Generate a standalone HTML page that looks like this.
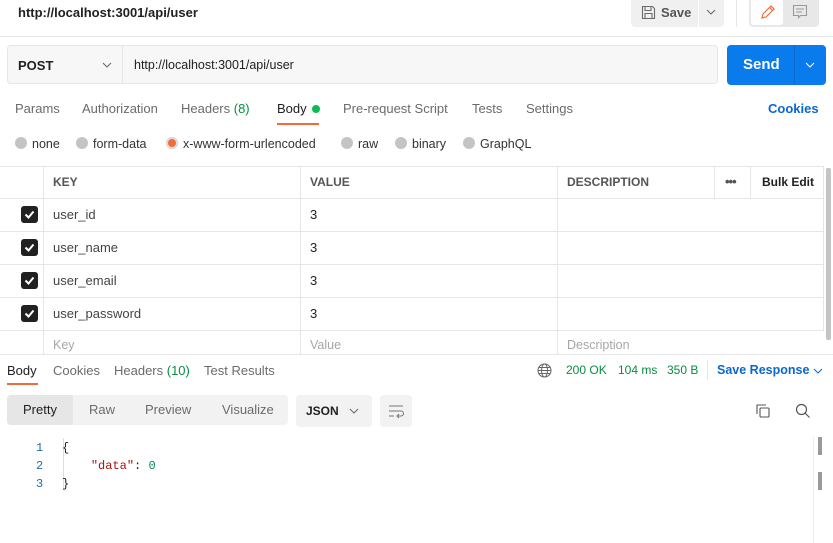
<!DOCTYPE html><html><head><style>
*{margin:0;padding:0;box-sizing:border-box}
body{width:833px;height:543px;background:#fff;font-family:"Liberation Sans",sans-serif;font-size:13px;color:#212121;position:relative;overflow:hidden}
.a{position:absolute;white-space:nowrap}
.g{color:#6b6b6b}
.hl{position:absolute;height:1px;background:#e6e6e6}
.vl{position:absolute;width:1px;background:#e6e6e6}
.cb{position:absolute;left:21px;width:17px;height:17px;background:#212121;border-radius:3px}
.cb svg{position:absolute;left:3px;top:3px}
.rd{display:inline-block;width:12px;height:12px;border-radius:50%;background:#c4c4c4;vertical-align:-1px;margin-right:5px}
</style></head><body>
<div class="a" style="left:18px;top:5px;font-size:13px;font-weight:bold">http://localhost:3001/api/user</div>
<div class="a" style="left:631px;top:0;width:67px;height:27px;background:#f0f0f0;border-radius:0 0 0 4px"></div>
<svg class="a" style="left:641px;top:5px" width="15" height="15" viewBox="0 0 15 15" fill="none" stroke="#6b6b6b" stroke-width="1.1"><path d="M1.5 1.5h10l2 2v10h-12z M4 1.5v4h6v-4 M4 13.5v-5h7v5"/></svg>
<div class="a" style="left:661px;top:5px;font-weight:bold;color:#555">Save</div>
<div class="a" style="left:699px;top:0;width:25px;height:27px;background:#f0f0f0;border-radius:0 0 4px 0"></div>
<svg class="a" style="left:706px;top:9px" width="10" height="6"><path d="M1 1l4 4 4-4" stroke="#666" fill="none"/></svg>
<div class="vl" style="left:736px;top:0;height:27px"></div>
<div class="a" style="left:749px;top:0;width:70px;height:27px;background:#e8e8e8;border-radius:0 0 4px 4px"></div>
<div class="a" style="left:751px;top:0;width:32px;height:25px;background:#fff;border-radius:0 0 3px 3px"></div>
<svg class="a" style="left:760px;top:4px" width="16" height="16" fill="none" stroke="#f26b3a" stroke-width="1.2"><path d="M2 14l1-4 8-8 3 3-8 8z M9.5 3.5l3 3"/></svg>
<svg class="a" style="left:792px;top:4px" width="16" height="16" fill="none" stroke="#999" stroke-width="1.1"><path d="M1.5 1.5h13v10h-6l-2 2v-2h-5z M4 5h8 M4 8h6"/></svg>
<div class="hl" style="left:0;top:36px;width:833px"></div>
<div class="a" style="left:7px;top:45px;width:711px;height:39px;background:#f7f7f7;border:1px solid #e6e6e6;border-radius:4px"></div>
<div class="a" style="left:7px;top:45px;width:116px;height:39px;border-right:1px solid #e6e6e6"></div>
<div class="a" style="left:18px;top:58px;font-weight:bold">POST</div>
<svg class="a" style="left:102px;top:62px" width="10" height="6"><path d="M1 1l4 4 4-4" stroke="#666" fill="none"/></svg>
<div class="a" style="left:134px;top:58px;font-size:12.5px">http://localhost:3001/api/user</div>
<div class="a" style="left:727px;top:45px;width:99px;height:40px;background:#097bed;border-radius:4px"></div>
<div class="vl" style="left:794px;top:45px;height:40px;background:#0a6ad0"></div>
<div class="a" style="left:743px;top:56px;font-size:15px;font-weight:bold;color:#fff">Send</div>
<svg class="a" style="left:805px;top:62px" width="10" height="6"><path d="M1 1l4 4 4-4" stroke="#fff" fill="none"/></svg>
<div class="a g" style="left:15px;top:101px">Params</div>
<div class="a g" style="left:82px;top:101px">Authorization</div>
<div class="a g" style="left:181px;top:101px">Headers <span style="color:#0a8c42">(8)</span></div>
<div class="a" style="left:277px;top:101px">Body <span style="display:inline-block;width:8px;height:8px;border-radius:50%;background:#0cbb52;margin-left:2px"></span></div>
<div class="a" style="left:277px;top:123px;width:42px;height:2px;background:#f26b3a"></div>
<div class="a g" style="left:343px;top:101px">Pre-request Script</div>
<div class="a g" style="left:472px;top:101px">Tests</div>
<div class="a g" style="left:526px;top:101px">Settings</div>
<div class="a" style="left:768px;top:101px;color:#0b67d0;font-weight:bold">Cookies</div>
<div class="a" style="left:15px;top:137px;font-size:12.5px;color:#333"><span class="rd"></span>none</div>
<div class="a" style="left:76px;top:137px;font-size:12.5px;color:#333"><span class="rd"></span>form-data</div>
<div class="a" style="left:166px;top:137px;font-size:12.5px;color:#333"><span class="rd" style="background:#f26b3a;box-shadow:0 0 0 2px #ddd inset"></span>x-www-form-urlencoded</div>
<div class="a" style="left:341px;top:137px;font-size:12.5px;color:#333"><span class="rd"></span>raw</div>
<div class="a" style="left:395px;top:137px;font-size:12.5px;color:#333"><span class="rd"></span>binary</div>
<div class="a" style="left:463px;top:137px;font-size:12.5px;color:#333"><span class="rd"></span>GraphQL</div>
<div class="hl" style="left:0;top:166px;width:823px"></div>
<div class="hl" style="left:0;top:198px;width:823px"></div>
<div class="hl" style="left:0;top:231px;width:823px"></div>
<div class="hl" style="left:0;top:264px;width:823px"></div>
<div class="hl" style="left:0;top:297px;width:823px"></div>
<div class="hl" style="left:0;top:330px;width:823px"></div>
<div class="vl" style="left:43px;top:166px;height:189px"></div>
<div class="vl" style="left:300px;top:166px;height:189px"></div>
<div class="vl" style="left:557px;top:166px;height:189px"></div>
<div class="vl" style="left:714px;top:166px;height:32px"></div>
<div class="vl" style="left:750px;top:166px;height:32px"></div>
<div class="vl" style="left:823px;top:166px;height:165px"></div>
<div class="a" style="left:53px;top:175px;font-size:12px;font-weight:bold;color:#555">KEY</div>
<div class="a" style="left:310px;top:175px;font-size:12px;font-weight:bold;color:#555">VALUE</div>
<div class="a" style="left:567px;top:175px;font-size:12px;font-weight:bold;color:#555">DESCRIPTION</div>
<div class="a" style="left:725px;top:174px;font-weight:bold;color:#555;letter-spacing:-1px;font-size:13px">•••</div>
<div class="a" style="left:762px;top:175px;font-size:12px;font-weight:bold">Bulk Edit</div>
<div class="cb" style="top:206px"><svg width="11" height="11"><path d="M1.5 5.5l3 3 5-6" stroke="#fff" stroke-width="2" fill="none"/></svg></div>
<div class="cb" style="top:239px"><svg width="11" height="11"><path d="M1.5 5.5l3 3 5-6" stroke="#fff" stroke-width="2" fill="none"/></svg></div>
<div class="cb" style="top:272px"><svg width="11" height="11"><path d="M1.5 5.5l3 3 5-6" stroke="#fff" stroke-width="2" fill="none"/></svg></div>
<div class="cb" style="top:305px"><svg width="11" height="11"><path d="M1.5 5.5l3 3 5-6" stroke="#fff" stroke-width="2" fill="none"/></svg></div>
<div class="a" style="left:53px;top:207px;color:#444">user_id</div><div class="a" style="left:310px;top:207px">3</div>
<div class="a" style="left:53px;top:240px;color:#444">user_name</div><div class="a" style="left:310px;top:240px">3</div>
<div class="a" style="left:53px;top:273px;color:#444">user_email</div><div class="a" style="left:310px;top:273px">3</div>
<div class="a" style="left:53px;top:306px;color:#444">user_password</div><div class="a" style="left:310px;top:306px">3</div>
<div class="a" style="left:53px;top:338px;color:#a6a6a6;font-size:12.5px">Key</div>
<div class="a" style="left:310px;top:338px;color:#a6a6a6;font-size:12.5px">Value</div>
<div class="a" style="left:567px;top:338px;color:#a6a6a6;font-size:12.5px">Description</div>
<div class="a" style="left:826px;top:168px;width:5px;height:172px;background:#c4c4c4;border-radius:2px"></div>
<div class="hl" style="left:0;top:354px;width:833px"></div>
<div class="a" style="left:7px;top:363px">Body</div>
<div class="a" style="left:7px;top:383px;width:31px;height:2px;background:#f26b3a"></div>
<div class="a g" style="left:53px;top:363px">Cookies</div>
<div class="a g" style="left:114px;top:363px">Headers <span style="color:#0a8c42">(10)</span></div>
<div class="a g" style="left:204px;top:363px">Test Results</div>
<svg class="a" style="left:537px;top:363px" width="15" height="15" fill="none" stroke="#666" stroke-width="1"><circle cx="7.5" cy="7.5" r="6.5"/><ellipse cx="7.5" cy="7.5" rx="3" ry="6.5"/><path d="M1 7.5h13 M2 4.5h11 M2 10.5h11"/></svg>
<div class="a" style="left:566px;top:363px;color:#0a8c42;font-size:12px">200 OK</div>
<div class="a" style="left:618px;top:363px;color:#0a8c42;font-size:12px">104 ms</div>
<div class="a" style="left:667px;top:363px;color:#0a8c42;font-size:12px">350 B</div>
<div class="vl" style="left:707px;top:360px;height:20px"></div>
<div class="a" style="left:717px;top:363px;color:#0b67d0;font-weight:bold;font-size:12.5px">Save Response</div>
<svg class="a" style="left:813px;top:368px" width="10" height="6"><path d="M1 1l4 4 4-4" stroke="#0b67d0" fill="none"/></svg>
<div class="a" style="left:7px;top:395px;width:281px;height:30px;background:#f2f2f2;border-radius:4px"></div>
<div class="a" style="left:7px;top:395px;width:66px;height:30px;background:#e6e6e6;border-radius:4px 0 0 4px"></div>
<div class="a" style="left:23px;top:402px">Pretty</div>
<div class="a g" style="left:89px;top:402px">Raw</div>
<div class="a g" style="left:145px;top:402px">Preview</div>
<div class="a g" style="left:222px;top:402px">Visualize</div>
<div class="a" style="left:296px;top:395px;width:76px;height:32px;background:#f2f2f2;border-radius:4px"></div>
<div class="a" style="left:306px;top:404px;font-size:12px;font-weight:bold">JSON</div>
<svg class="a" style="left:349px;top:408px" width="10" height="6"><path d="M1 1l4 4 4-4" stroke="#666" fill="none"/></svg>
<div class="a" style="left:380px;top:395px;width:32px;height:32px;background:#f2f2f2;border-radius:4px"></div>
<svg class="a" style="left:388px;top:403px" width="16" height="16" fill="none" stroke="#777" stroke-width="1"><path d="M1 3h14 M1 8h12a2.5 2.5 0 0 1 0 5h-4 M11 11l-2 2 2 2 M1 13h5"/></svg>
<svg class="a" style="left:755px;top:403px" width="16" height="16" fill="none" stroke="#555" stroke-width="1.1"><path d="M2 11V2h9"/><rect x="5" y="5" width="9" height="9" rx="1"/></svg>
<svg class="a" style="left:795px;top:403px" width="16" height="16" fill="none" stroke="#555" stroke-width="1.2"><circle cx="6.5" cy="6.5" r="5"/><path d="M10 10l4.5 4.5"/></svg>
<div class="a" style="left:818px;top:437px;width:4px;height:18px;background:#999"></div>
<div class="a" style="left:818px;top:472px;width:4px;height:18px;background:#999"></div>
<div class="vl" style="left:813px;top:437px;height:106px;background:#eee"></div>
<div class="a" style="left:36px;top:439px;font-family:'Liberation Mono',monospace;font-size:12px;color:#1d6fa5;line-height:18px">1<br>2<br>3</div>
<div class="vl" style="left:63px;top:438px;height:52px;background:#ddd"></div>
<div class="a" style="left:62px;top:439px;font-family:'Liberation Mono',monospace;font-size:12px;line-height:18px">{<br>&nbsp;&nbsp;&nbsp;&nbsp;<span style="color:#a11">"data"</span>: <span style="color:#098658">0</span><br>}</div>
</body></html>
